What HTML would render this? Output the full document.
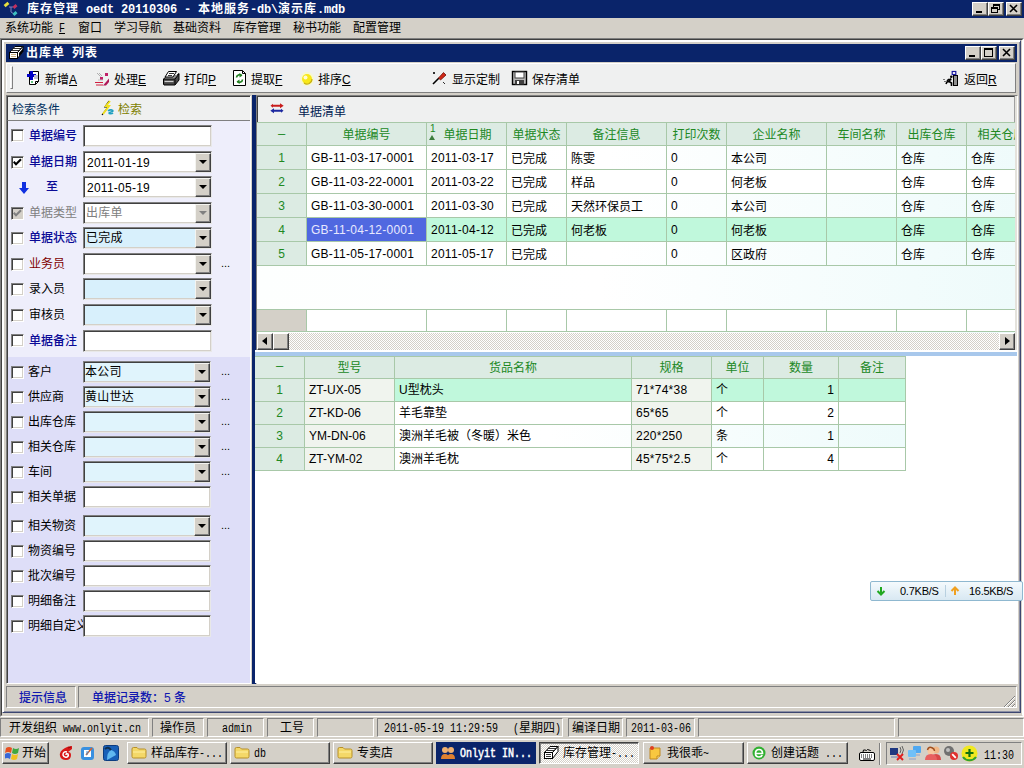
<!DOCTYPE html><html lang="zh-CN"><head><meta charset="utf-8"><title>库存管理</title><style>
*{box-sizing:border-box;margin:0;padding:0}
html,body{width:1024px;height:768px;overflow:hidden;background:#d4d0c8}
body{position:relative;font-family:"Liberation Sans","Noto Sans CJK SC",sans-serif;font-size:12px;color:#000;line-height:14px}
.a{position:absolute;white-space:nowrap}
.t{position:absolute;white-space:nowrap;height:14px;line-height:14px;font-size:12px}
.m{font-family:"Liberation Mono","Noto Sans CJK SC",monospace}
.b{font-weight:bold}
.navy{background:#0a246a}
.face{background:#d4d0c8}
.raised{border:1px solid;border-color:#fff #404040 #404040 #fff;box-shadow:inset -1px -1px 0 #808080,inset 1px 1px 0 #d4d0c8;background:#d4d0c8}
.sunk{border:1px solid;border-color:#808080 #fff #fff #808080}
.sunk2{border:1px solid;border-color:#808080 #fff #fff #808080;box-shadow:inset 1px 1px 0 #404040,inset -1px -1px 0 #d4d0c8}
.inp{position:absolute;background:#fff;border:1px solid;border-color:#808080 #e8e8e8 #e8e8e8 #808080;box-shadow:inset 1px 1px 0 #404040,inset -1px -1px 0 #d4d0c8}
.cb{position:absolute;width:13px;height:13px;background:#fff;border:1px solid;border-color:#808080 #fff #fff #808080;box-shadow:inset 1px 1px 0 #404040,inset -1px -1px 0 #d4d0c8}
.dd{position:absolute;width:16px;background:#d4d0c8;border:1px solid;border-color:#f4f4f0 #404040 #404040 #f4f4f0;box-shadow:inset -1px -1px 0 #808080}
.dd:after{content:"";position:absolute;left:3px;top:6px;border:4px solid transparent;border-top:4px solid #000;border-bottom:0}
.dd.dis:after{border-top-color:#808080}
.cap{position:absolute;width:16px;height:14px}
.cn_{font-family:"Liberation Sans","Noto Sans CJK SC",sans-serif}
.cb_{font-family:"Liberation Sans","Noto Sans CJK SC",sans-serif;font-weight:bold;letter-spacing:1px}
.ln_{font-family:"Liberation Mono",monospace;font-size:12px;display:inline-block;transform:scaleX(.8333);transform-origin:0 50%}
.lb_{font-family:"Liberation Mono",monospace;font-weight:bold;font-size:12px;letter-spacing:-0.2px}
.ar{letter-spacing:0.25px}
</style></head><body>
<div class="a navy" style="left:0px;top:0px;width:1024px;height:18px;"></div>
<div class="t " style="left:27px;top:2px;color:#fff"><span class="cb_">库存管理</span><span class="lb_"> oedt 20110306 - </span><span class="cb_">本地服务</span><span class="lb_">-db\</span><span class="cb_">演示库</span><span class="lb_">.mdb</span></div>
<svg class="a" style="left:3px;top:1px" width="16" height="16" viewBox="0 0 16 16"><path d="M6 6h4M8 6v5l3 2" stroke="#8080c0" stroke-width="1" fill="none"/><rect x="1" y="2" width="5" height="3" transform="rotate(-40 3.5 3.5)" fill="#e8e040"/><rect x="10" y="4" width="4" height="3" transform="rotate(-40 12 5.5)" fill="#c03060"/><rect x="10" y="11" width="4" height="3" transform="rotate(-40 12 12.5)" fill="#40c0c0"/></svg>
<div class="cap raised" style="left:972px;top:2px"><svg class="a" style="left:-1px;top:-1px" width="16" height="14" viewBox="0 0 16 14"><rect x="4" y="9" width="6" height="2" fill="#000"/></svg></div>
<div class="cap raised" style="left:988px;top:2px"><svg class="a" style="left:-1px;top:-1px" width="16" height="14" viewBox="0 0 16 14"><rect x="5.5" y="2.5" width="6" height="5" fill="none" stroke="#000"/><rect x="5" y="2" width="7" height="2" fill="#000"/><rect x="3.5" y="5.5" width="6" height="5" fill="#d4d0c8" stroke="#000"/><rect x="3" y="5" width="7" height="2" fill="#000"/></svg></div>
<div class="cap raised" style="left:1006px;top:2px"><svg class="a" style="left:-1px;top:-1px" width="16" height="14" viewBox="0 0 16 14"><path d="M4 3l7 7M11 3l-7 7" stroke="#000" stroke-width="1.6"/></svg></div>
<div class="t " style="left:5px;top:21px;"><span class="cn_">系统功能</span><span class="ln_" style="margin-right:-1.2px;"> </span><span class="ln_" style="margin-right:-1.2px;text-decoration:underline;">F</span></div>
<div class="t " style="left:78px;top:21px;"><span class="cn_">窗口</span></div>
<div class="t " style="left:114px;top:21px;"><span class="cn_">学习导航</span></div>
<div class="t " style="left:173px;top:21px;"><span class="cn_">基础资料</span></div>
<div class="t " style="left:233px;top:21px;"><span class="cn_">库存管理</span></div>
<div class="t " style="left:293px;top:21px;"><span class="cn_">秘书功能</span></div>
<div class="t " style="left:353px;top:21px;"><span class="cn_">配置管理</span></div>
<div class="a " style="left:0px;top:38px;width:1024px;height:679px;border:1px solid;border-color:#808080 #fff #fff #808080;background:#d4d0c8"></div>
<div class="a " style="left:1px;top:39px;width:1022px;height:677px;border:1px solid;border-color:#404040 #fff #d4d0c8 #404040;background:#d4d0c8"></div>
<div class="a " style="left:2px;top:40px;width:1019px;height:673px;background:#d4d0c8;border:1px solid;border-color:#fff #3c4670 #3c4670 #fff;box-shadow:inset 1px 1px 0 #fff,inset -1px -1px 0 #8c90a4"></div>
<div class="a navy" style="left:6px;top:44px;width:1011px;height:18px;"></div>
<div class="t " style="left:26px;top:46px;color:#fff"><span class="cb_">出库单</span><span class="lb_"> </span><span class="cb_">列表</span></div>
<svg class="a" style="left:8px;top:45px" width="16" height="16" viewBox="0 0 16 16"><path d="M1.500 7.500L7 1.500h8l-5.500 6z" fill="#fff" stroke="#000"/><path d="M4 5.500h8M5.500 3.500h8" stroke="#000" stroke-width=".8"/><path d="M9.500 7.500L15 1.500v5l-5.500 7z" fill="#fff" stroke="#000"/><path d="M11 8l4-4.500v3l-4 5z" fill="#000"/><rect x="1.500" y="7.500" width="8" height="6" fill="#fff" stroke="#000"/><path d="M3 9.500h5M3 11.500h5" stroke="#c8b080"/></svg>
<div class="cap raised" style="left:965px;top:46px"><svg class="a" style="left:-1px;top:-1px" width="16" height="14" viewBox="0 0 16 14"><rect x="4" y="9" width="6" height="2" fill="#000"/></svg></div>
<div class="cap raised" style="left:981px;top:46px"><svg class="a" style="left:-1px;top:-1px" width="16" height="14" viewBox="0 0 16 14"><rect x="3.5" y="2.5" width="8" height="8" fill="none" stroke="#000"/><rect x="3" y="2" width="9" height="2" fill="#000"/></svg></div>
<div class="cap raised" style="left:999px;top:46px"><svg class="a" style="left:-1px;top:-1px" width="16" height="14" viewBox="0 0 16 14"><path d="M4 3l7 7M11 3l-7 7" stroke="#000" stroke-width="1.6"/></svg></div>
<div class="a " style="left:6px;top:63px;width:1010px;height:30px;background:#eff0f0;border:1px solid;border-color:#fff #808080 #808080 #fff"></div>
<div class="a " style="left:10px;top:66px;width:3px;height:23px;border:1px solid;border-color:#fff #808080 #808080 #fff"></div>
<svg class="a" style="left:26px;top:70px" width="18" height="16" viewBox="0 0 18 16"><path d="M3.5 1.500h9v10l-3 3h-6z" fill="#fff" stroke="#000"/><path d="M9.500 14.500v-3h3" fill="none" stroke="#000"/><path d="M4 1h3v3h3v3H7v3H4V7H1V4h3z" fill="#0000c8"/><rect x="5" y="11" width="2" height="2" fill="#60c080"/><path d="M8 5h4v4H8z" fill="#c0c0d0"/></svg>
<div class="t " style="left:45px;top:73px;">新增<u>A</u></div>
<svg class="a" style="left:94px;top:70px" width="18" height="16" viewBox="0 0 18 16"><rect x="11" y="3" width="3" height="3" fill="#c02068"/><rect x="6" y="7" width="3" height="3" fill="#c02068"/><path d="M1 12.500h8M2 15h7" stroke="#d02040" stroke-width="1.200"/><path d="M9 15.500l6-7v3.500l-3 3.500z" fill="#b01858"/><path d="M3 3l3.500 3.500M5 3l3 3" stroke="#b0b0b0" stroke-width="1"/><path d="M4 10h5" stroke="#c0c0c0"/></svg>
<div class="t " style="left:114px;top:73px;">处理<u>E</u></div>
<svg class="a" style="left:162px;top:70px" width="18" height="16" viewBox="0 0 18 16"><path d="M1.500 9l3.500-3h9l3-2.500v6.500l-4 5h-11l-.5-1z" fill="#484848" stroke="#000"/><path d="M1.500 9h11.500l4-5" fill="none" stroke="#000"/><path d="M5 6l1.500-1h9l-3 3.500h-10z" fill="#909090"/><path d="M6.500 1.500h8l-3.500 5.500h-8z" fill="#fff" stroke="#000"/><path d="M7 3.500h5M6 5.500h4" stroke="#000" stroke-width=".8"/><path d="M2.500 11.500h9" stroke="#d0d0d0" stroke-width="1.200"/><path d="M13 9.500v5" stroke="#000"/></svg>
<div class="t " style="left:184px;top:73px;">打印<u>P</u></div>
<svg class="a" style="left:232px;top:70px" width="18" height="16" viewBox="0 0 18 16"><path d="M1.500 .500h9l3 3v12h-12z" fill="#fff" stroke="#000"/><path d="M10.500 .500v3h3" fill="none" stroke="#000"/><path d="M9.500 5.500a3 3 0 0 0-5 2M5.500 11.500a3 3 0 0 0 5-2" fill="none" stroke="#208020" stroke-width="1.700"/><path d="M7.500 3l3 2.500-3 2zM7.500 14l-3-2.500 3-2z" fill="#208020"/></svg>
<div class="t " style="left:251px;top:73px;">提取<u>F</u></div>
<svg class="a" style="left:298px;top:70px" width="18" height="16" viewBox="0 0 18 16"><circle cx="9" cy="9" r="7" fill="#fbfbc0" opacity=".7"/><circle cx="9" cy="9" r="5" fill="#f8e818"/><circle cx="7.500" cy="7.500" r="2" fill="#fffbd0"/><path d="M6 13a5 5 0 0 0 8-4" fill="none" stroke="#c8b010" stroke-width="1.200"/></svg>
<div class="t " style="left:318px;top:73px;">排序<u>C</u></div>
<svg class="a" style="left:431px;top:70px" width="18" height="16" viewBox="0 0 18 16"><path d="M2 14l6-6" stroke="#000" stroke-width="1.600"/><path d="M7.500 8l5-5.500 2.500 2.500-5.500 5z" fill="#d02818" stroke="#701008" stroke-width=".8"/><path d="M2 2l2 2M4 2l-2 2M12 12l2 2" stroke="#303030"/></svg>
<div class="t " style="left:452px;top:73px;">显示定制</div>
<svg class="a" style="left:511px;top:70px" width="18" height="16" viewBox="0 0 18 16"><rect x="1.500" y="1.500" width="14" height="13" fill="#b8b8b8" stroke="#000" stroke-width="1.400"/><rect x="4" y="2" width="9" height="6" fill="#fff" stroke="#404040"/><rect x="4" y="10" width="9" height="4.500" fill="#404040"/><rect x="6" y="11" width="2" height="3" fill="#fff"/></svg>
<div class="t " style="left:532px;top:73px;">保存清单</div>
<svg class="a" style="left:943px;top:70px" width="18" height="16" viewBox="0 0 18 16"><rect x="10.500" y="5.500" width="4" height="10" fill="#909090" stroke="#000"/><rect x="9.200" y="1.500" width="3.600" height="3" fill="#fff" stroke="#1818a0" stroke-width="1.200"/><circle cx="8.300" cy="6.800" r="1.300" fill="#000"/><path d="M8 8.500L6 11.500l2.500 1.500v3M6 11.500l-2 .5-1 2M8.500 9.500h-3l-1.500 1.500" stroke="#000" stroke-width="1.600" fill="none"/><path d="M.5 9.500h2M1.500 11.500h2" stroke="#000" stroke-dasharray="1 1"/></svg>
<div class="t " style="left:964px;top:73px;">返回<u>R</u></div>
<div class="a " style="left:6px;top:95px;width:245px;height:589px;border:1px solid;border-color:#808080 #fff #fff #808080;box-shadow:inset 1px 1px 0 #404040;background:#eeeefb"></div>
<div class="a " style="left:7px;top:96px;width:243px;height:25px;background:#eff0f0;border-bottom:1px solid #808080;border-top:1px solid #404040;border-left:1px solid #404040"></div>
<div class="a " style="left:8px;top:357px;width:242px;height:326px;background:#dedef8"></div>
<div class="t " style="left:12px;top:103px;color:#003060">检索条件</div>
<svg class="a" style="left:100px;top:100px" width="16" height="16" viewBox="0 0 16 16"><path d="M9 1l-4 6h3l-6 8" stroke="#000" stroke-width="1.200" fill="none"/><path d="M10 1L6 6h3L3 14" stroke="#f0e020" stroke-width="2" fill="none"/><path d="M8 11c2-2 5-1 5 0s-4 1-4 2 3 1 4 0" stroke="#20a0c0" stroke-width="1.600" fill="none"/></svg>
<div class="t " style="left:118px;top:103px;color:#808000">检索</div>
<div class="cb" style="left:11px;top:129px;"></div>
<div class="t " style="left:29px;top:129px;color:#0a0a96;font-weight:500">单据编号</div>
<div class="inp" style="left:83px;top:125px;width:129px;height:22px;background:#fff"></div>
<div class="cb" style="left:11px;top:156px;"><svg class="a" style="left:1px;top:1px" width="9" height="9" viewBox="0 0 9 9"><path d="M.7 3.800l2.300 2.400 5-5" stroke="#000" stroke-width="2.100" fill="none"/></svg></div>
<div class="t " style="left:29px;top:155px;color:#0a0a96;font-weight:500">单据日期</div>
<div class="inp" style="left:83px;top:151px;width:129px;height:22px;background:#fff"></div>
<div class="dd" style="left:195px;top:153px;height:19px"></div>
<div class="t ar" style="left:87px;top:156px;color:#000">2011-01-19</div>
<div class="t " style="left:46px;top:180px;color:#0a0a96;font-weight:500">至</div>
<div class="inp" style="left:83px;top:176px;width:129px;height:22px;background:#fff"></div>
<div class="dd" style="left:195px;top:178px;height:19px"></div>
<div class="t ar" style="left:87px;top:181px;color:#000">2011-05-19</div>
<div class="cb" style="left:11px;top:207px;background:#d4d0c8;"><svg class="a" style="left:1px;top:1px" width="9" height="9" viewBox="0 0 9 9"><path d="M.7 3.800l2.300 2.400 5-5" stroke="#808080" stroke-width="2.100" fill="none"/></svg></div>
<div class="t " style="left:29px;top:206px;color:#808080;">单据类型</div>
<div class="inp" style="left:83px;top:202px;width:129px;height:22px;background:#fff"></div>
<div class="dd dis" style="left:195px;top:204px;height:19px"></div>
<div class="t ar" style="left:86px;top:206px;color:#808080">出库单</div>
<div class="cb" style="left:11px;top:232px;"></div>
<div class="t " style="left:29px;top:231px;color:#0a0a96;font-weight:500">单据状态</div>
<div class="inp" style="left:83px;top:227px;width:129px;height:22px;background:#d8f0fc"></div>
<div class="dd" style="left:195px;top:229px;height:19px"></div>
<div class="t ar" style="left:86px;top:231px;color:#000">已完成</div>
<div class="cb" style="left:11px;top:258px;"></div>
<div class="t " style="left:29px;top:257px;color:#800000;">业务员</div>
<div class="inp" style="left:83px;top:253px;width:129px;height:22px;background:#fff"></div>
<div class="dd" style="left:195px;top:255px;height:19px"></div>
<div class="t " style="left:221px;top:256px;font-size:11px">...</div>
<div class="cb" style="left:11px;top:283px;"></div>
<div class="t " style="left:29px;top:282px;color:#000;">录入员</div>
<div class="inp" style="left:83px;top:278px;width:129px;height:22px;background:#d8f0fc"></div>
<div class="dd" style="left:195px;top:280px;height:19px"></div>
<div class="cb" style="left:11px;top:309px;"></div>
<div class="t " style="left:29px;top:308px;color:#000;">审核员</div>
<div class="inp" style="left:83px;top:304px;width:129px;height:22px;background:#d8f0fc"></div>
<div class="dd" style="left:195px;top:306px;height:19px"></div>
<div class="cb" style="left:11px;top:334px;"></div>
<div class="t " style="left:29px;top:334px;color:#0a0a96;font-weight:500">单据备注</div>
<div class="inp" style="left:83px;top:330px;width:129px;height:22px;background:#fff"></div>
<svg class="a" style="left:18px;top:182px" width="12" height="13" viewBox="0 0 12 13"><path d="M4 0h4v6h3l-5 6-5-6h3z" fill="#1030e0"/></svg>
<div class="cb" style="left:11px;top:366px;"></div>
<div class="t " style="left:28px;top:365px;color:#000;">客户</div>
<div class="inp" style="left:83px;top:361px;width:128px;height:22px;background:#e0f4fc"></div>
<div class="dd" style="left:194px;top:363px;height:19px"></div>
<div class="t ar" style="left:85px;top:365px;color:#000">本公司</div>
<div class="t " style="left:221px;top:364px;font-size:11px">...</div>
<div class="cb" style="left:11px;top:391px;"></div>
<div class="t " style="left:28px;top:390px;color:#000;">供应商</div>
<div class="inp" style="left:83px;top:386px;width:128px;height:22px;background:#e0f4fc"></div>
<div class="dd" style="left:194px;top:388px;height:19px"></div>
<div class="t ar" style="left:85px;top:390px;color:#000">黄山世达</div>
<div class="t " style="left:221px;top:389px;font-size:11px">...</div>
<div class="cb" style="left:11px;top:416px;"></div>
<div class="t " style="left:28px;top:415px;color:#000;">出库仓库</div>
<div class="inp" style="left:83px;top:411px;width:128px;height:22px;background:#e0f4fc"></div>
<div class="dd" style="left:194px;top:413px;height:19px"></div>
<div class="t " style="left:221px;top:414px;font-size:11px">...</div>
<div class="cb" style="left:11px;top:441px;"></div>
<div class="t " style="left:28px;top:440px;color:#000;">相关仓库</div>
<div class="inp" style="left:83px;top:436px;width:128px;height:22px;background:#e0f4fc"></div>
<div class="dd" style="left:194px;top:438px;height:19px"></div>
<div class="t " style="left:221px;top:439px;font-size:11px">...</div>
<div class="cb" style="left:11px;top:466px;"></div>
<div class="t " style="left:28px;top:465px;color:#000;">车间</div>
<div class="inp" style="left:83px;top:461px;width:128px;height:22px;background:#e0f4fc"></div>
<div class="dd" style="left:194px;top:463px;height:19px"></div>
<div class="t " style="left:221px;top:464px;font-size:11px">...</div>
<div class="cb" style="left:11px;top:491px;"></div>
<div class="t " style="left:28px;top:490px;color:#000;">相关单据</div>
<div class="inp" style="left:83px;top:486px;width:128px;height:22px;background:#fff"></div>
<div class="cb" style="left:11px;top:520px;"></div>
<div class="t " style="left:28px;top:519px;color:#000;">相关物资</div>
<div class="inp" style="left:83px;top:515px;width:128px;height:22px;background:#e0f4fc"></div>
<div class="dd" style="left:194px;top:517px;height:19px"></div>
<div class="t " style="left:221px;top:518px;font-size:11px">...</div>
<div class="cb" style="left:11px;top:545px;"></div>
<div class="t " style="left:28px;top:544px;color:#000;">物资编号</div>
<div class="inp" style="left:83px;top:540px;width:128px;height:22px;background:#fff"></div>
<div class="cb" style="left:11px;top:570px;"></div>
<div class="t " style="left:28px;top:569px;color:#000;">批次编号</div>
<div class="inp" style="left:83px;top:565px;width:128px;height:22px;background:#fff"></div>
<div class="cb" style="left:11px;top:595px;"></div>
<div class="t " style="left:28px;top:594px;color:#000;">明细备注</div>
<div class="inp" style="left:83px;top:590px;width:128px;height:22px;background:#fff"></div>
<div class="cb" style="left:11px;top:620px;"></div>
<div class="t " style="left:28px;top:619px;color:#000;">明细自定义</div>
<div class="inp" style="left:83px;top:615px;width:128px;height:22px;background:#fff"></div>
<div class="a navy" style="left:252px;top:95px;width:4px;height:589px;"></div>
<div class="a " style="left:256px;top:95px;width:762px;height:589px;border:1px solid;border-color:#808080 #fff #fff #808080;background:#fff"></div>
<div class="a " style="left:257px;top:96px;width:758px;height:26px;background:#eff0f0;border-top:1px solid #404040;border-left:1px solid #404040;border-right:1px solid #a0a0a0"></div>
<div class="a " style="left:1015px;top:96px;width:2px;height:255px;background:#e4e2dc"></div>
<svg class="a" style="left:269px;top:102px" width="16" height="13" viewBox="0 0 16 13"><path d="M1.500 3.750l2.500-2v1.100h7v-1.600l3.700 2.500-3.700 2.500v-1.600h-7v1.100z" fill="#c81c1c"/><path d="M14.500 8.750l-2.500 2v-1.100h-7v1.600l-3.700-2.500 3.700-2.500v1.600h7v-1.100z" fill="#1c28a0"/></svg>
<div class="t " style="left:298px;top:105px;color:#002050">单据清单</div>
<div class="a " style="left:257px;top:122px;width:758px;height:211px;background:linear-gradient(90deg,#fdfffe 0%,#fff 45%,#eefbfb 100%)"></div>
<div class="a" style="left:257px;top:122px;width:758px;height:144px;overflow:hidden">
<div class="a " style="left:0px;top:0px;width:780px;height:24px;background:#dcebe3;border-bottom:1px solid #a8c8a8;border-top:1px solid #a8c8a8"></div>
<div class="a" style="left:0px;top:0;width:50px;height:23px;border-right:1px solid #a8c8a8;text-align:center;line-height:27px;color:#20881f;overflow:hidden"><span style="font-size:13px;position:relative;top:-2px">–</span></div>
<div class="a" style="left:50px;top:0;width:120px;height:23px;border-right:1px solid #a8c8a8;text-align:center;line-height:27px;color:#20881f;overflow:hidden">单据编号</div>
<div class="a" style="left:170px;top:0;width:80px;height:23px;border-right:1px solid #a8c8a8;text-align:center;line-height:27px;color:#20881f;overflow:hidden"><span style="position:absolute;left:3px;top:-7px;font-size:10px">1</span><span style="position:absolute;left:2px;top:13px;width:0;height:0;border:3px solid transparent;border-top:0;border-bottom:5px solid #3c7c3c"></span><span style="position:relative;left:1px">单据日期</span></div>
<div class="a" style="left:250px;top:0;width:60px;height:23px;border-right:1px solid #a8c8a8;text-align:center;line-height:27px;color:#20881f;overflow:hidden">单据状态</div>
<div class="a" style="left:310px;top:0;width:100px;height:23px;border-right:1px solid #a8c8a8;text-align:center;line-height:27px;color:#20881f;overflow:hidden">备注信息</div>
<div class="a" style="left:410px;top:0;width:60px;height:23px;border-right:1px solid #a8c8a8;text-align:center;line-height:27px;color:#20881f;overflow:hidden">打印次数</div>
<div class="a" style="left:470px;top:0;width:100px;height:23px;border-right:1px solid #a8c8a8;text-align:center;line-height:27px;color:#20881f;overflow:hidden">企业名称</div>
<div class="a" style="left:570px;top:0;width:70px;height:23px;border-right:1px solid #a8c8a8;text-align:center;line-height:27px;color:#20881f;overflow:hidden">车间名称</div>
<div class="a" style="left:640px;top:0;width:70px;height:23px;border-right:1px solid #a8c8a8;text-align:center;line-height:27px;color:#20881f;overflow:hidden">出库仓库</div>
<div class="a" style="left:710px;top:0;width:70px;height:23px;border-right:1px solid #a8c8a8;text-align:center;line-height:27px;color:#20881f;overflow:hidden">相关仓库</div>
<div class="a " style="left:0px;top:24px;width:780px;height:24px;background:linear-gradient(90deg,#fdfffe 0%,#fff 45%,#eefbfb 100%);border-bottom:1px solid #a8c8a8"></div>
<div class="a" style="left:0px;top:24px;width:50px;height:23px;border-right:1px solid #a8c8a8;line-height:25px;overflow:hidden;text-align:center;color:#20881f;background:#dcebe3;">1</div>
<div class="a ar" style="left:50px;top:24px;width:120px;height:23px;border-right:1px solid #a8c8a8;line-height:25px;overflow:hidden;text-align:left;padding:0 4px;">GB-11-03-17-0001</div>
<div class="a ar" style="left:170px;top:24px;width:80px;height:23px;border-right:1px solid #a8c8a8;line-height:25px;overflow:hidden;text-align:left;padding:0 4px;">2011-03-17</div>
<div class="a" style="left:250px;top:24px;width:60px;height:23px;border-right:1px solid #a8c8a8;line-height:27px;overflow:hidden;text-align:left;padding:0 4px;">已完成</div>
<div class="a" style="left:310px;top:24px;width:100px;height:23px;border-right:1px solid #a8c8a8;line-height:27px;overflow:hidden;text-align:left;padding:0 4px;">陈雯</div>
<div class="a" style="left:410px;top:24px;width:60px;height:23px;border-right:1px solid #a8c8a8;line-height:25px;overflow:hidden;text-align:left;padding:0 4px;">0</div>
<div class="a" style="left:470px;top:24px;width:100px;height:23px;border-right:1px solid #a8c8a8;line-height:27px;overflow:hidden;text-align:left;padding:0 4px;">本公司</div>
<div class="a" style="left:570px;top:24px;width:70px;height:23px;border-right:1px solid #a8c8a8;line-height:27px;overflow:hidden;text-align:left;padding:0 4px;"></div>
<div class="a" style="left:640px;top:24px;width:70px;height:23px;border-right:1px solid #a8c8a8;line-height:27px;overflow:hidden;text-align:left;padding:0 4px;">仓库</div>
<div class="a" style="left:710px;top:24px;width:70px;height:23px;border-right:1px solid #a8c8a8;line-height:27px;overflow:hidden;text-align:left;padding:0 4px;">仓库</div>
<div class="a " style="left:0px;top:48px;width:780px;height:24px;background:#fff;border-bottom:1px solid #a8c8a8"></div>
<div class="a" style="left:0px;top:48px;width:50px;height:23px;border-right:1px solid #a8c8a8;line-height:25px;overflow:hidden;text-align:center;color:#20881f;background:#dcebe3;">2</div>
<div class="a ar" style="left:50px;top:48px;width:120px;height:23px;border-right:1px solid #a8c8a8;line-height:25px;overflow:hidden;text-align:left;padding:0 4px;">GB-11-03-22-0001</div>
<div class="a ar" style="left:170px;top:48px;width:80px;height:23px;border-right:1px solid #a8c8a8;line-height:25px;overflow:hidden;text-align:left;padding:0 4px;">2011-03-22</div>
<div class="a" style="left:250px;top:48px;width:60px;height:23px;border-right:1px solid #a8c8a8;line-height:27px;overflow:hidden;text-align:left;padding:0 4px;">已完成</div>
<div class="a" style="left:310px;top:48px;width:100px;height:23px;border-right:1px solid #a8c8a8;line-height:27px;overflow:hidden;text-align:left;padding:0 4px;">样品</div>
<div class="a" style="left:410px;top:48px;width:60px;height:23px;border-right:1px solid #a8c8a8;line-height:25px;overflow:hidden;text-align:left;padding:0 4px;">0</div>
<div class="a" style="left:470px;top:48px;width:100px;height:23px;border-right:1px solid #a8c8a8;line-height:27px;overflow:hidden;text-align:left;padding:0 4px;">何老板</div>
<div class="a" style="left:570px;top:48px;width:70px;height:23px;border-right:1px solid #a8c8a8;line-height:27px;overflow:hidden;text-align:left;padding:0 4px;"></div>
<div class="a" style="left:640px;top:48px;width:70px;height:23px;border-right:1px solid #a8c8a8;line-height:27px;overflow:hidden;text-align:left;padding:0 4px;">仓库</div>
<div class="a" style="left:710px;top:48px;width:70px;height:23px;border-right:1px solid #a8c8a8;line-height:27px;overflow:hidden;text-align:left;padding:0 4px;">仓库</div>
<div class="a " style="left:0px;top:72px;width:780px;height:24px;background:linear-gradient(90deg,#fdfffe 0%,#fff 45%,#eefbfb 100%);border-bottom:1px solid #a8c8a8"></div>
<div class="a" style="left:0px;top:72px;width:50px;height:23px;border-right:1px solid #a8c8a8;line-height:25px;overflow:hidden;text-align:center;color:#20881f;background:#dcebe3;">3</div>
<div class="a ar" style="left:50px;top:72px;width:120px;height:23px;border-right:1px solid #a8c8a8;line-height:25px;overflow:hidden;text-align:left;padding:0 4px;">GB-11-03-30-0001</div>
<div class="a ar" style="left:170px;top:72px;width:80px;height:23px;border-right:1px solid #a8c8a8;line-height:25px;overflow:hidden;text-align:left;padding:0 4px;">2011-03-30</div>
<div class="a" style="left:250px;top:72px;width:60px;height:23px;border-right:1px solid #a8c8a8;line-height:27px;overflow:hidden;text-align:left;padding:0 4px;">已完成</div>
<div class="a" style="left:310px;top:72px;width:100px;height:23px;border-right:1px solid #a8c8a8;line-height:27px;overflow:hidden;text-align:left;padding:0 4px;">天然环保员工</div>
<div class="a" style="left:410px;top:72px;width:60px;height:23px;border-right:1px solid #a8c8a8;line-height:25px;overflow:hidden;text-align:left;padding:0 4px;">0</div>
<div class="a" style="left:470px;top:72px;width:100px;height:23px;border-right:1px solid #a8c8a8;line-height:27px;overflow:hidden;text-align:left;padding:0 4px;">本公司</div>
<div class="a" style="left:570px;top:72px;width:70px;height:23px;border-right:1px solid #a8c8a8;line-height:27px;overflow:hidden;text-align:left;padding:0 4px;"></div>
<div class="a" style="left:640px;top:72px;width:70px;height:23px;border-right:1px solid #a8c8a8;line-height:27px;overflow:hidden;text-align:left;padding:0 4px;">仓库</div>
<div class="a" style="left:710px;top:72px;width:70px;height:23px;border-right:1px solid #a8c8a8;line-height:27px;overflow:hidden;text-align:left;padding:0 4px;">仓库</div>
<div class="a " style="left:0px;top:96px;width:780px;height:24px;background:#c0f8dc;border-bottom:1px solid #a8c8a8"></div>
<div class="a" style="left:0px;top:96px;width:50px;height:23px;border-right:1px solid #a8c8a8;line-height:25px;overflow:hidden;text-align:center;color:#20881f;background:#dcebe3;">4</div>
<div class="a ar" style="left:50px;top:96px;width:120px;height:23px;border-right:1px solid #a8c8a8;line-height:25px;overflow:hidden;text-align:left;padding:0 4px;background:#5068e0;color:#e8e8ff;">GB-11-04-12-0001</div>
<div class="a ar" style="left:170px;top:96px;width:80px;height:23px;border-right:1px solid #a8c8a8;line-height:25px;overflow:hidden;text-align:left;padding:0 4px;">2011-04-12</div>
<div class="a" style="left:250px;top:96px;width:60px;height:23px;border-right:1px solid #a8c8a8;line-height:27px;overflow:hidden;text-align:left;padding:0 4px;">已完成</div>
<div class="a" style="left:310px;top:96px;width:100px;height:23px;border-right:1px solid #a8c8a8;line-height:27px;overflow:hidden;text-align:left;padding:0 4px;">何老板</div>
<div class="a" style="left:410px;top:96px;width:60px;height:23px;border-right:1px solid #a8c8a8;line-height:25px;overflow:hidden;text-align:left;padding:0 4px;">0</div>
<div class="a" style="left:470px;top:96px;width:100px;height:23px;border-right:1px solid #a8c8a8;line-height:27px;overflow:hidden;text-align:left;padding:0 4px;">何老板</div>
<div class="a" style="left:570px;top:96px;width:70px;height:23px;border-right:1px solid #a8c8a8;line-height:27px;overflow:hidden;text-align:left;padding:0 4px;"></div>
<div class="a" style="left:640px;top:96px;width:70px;height:23px;border-right:1px solid #a8c8a8;line-height:27px;overflow:hidden;text-align:left;padding:0 4px;">仓库</div>
<div class="a" style="left:710px;top:96px;width:70px;height:23px;border-right:1px solid #a8c8a8;line-height:27px;overflow:hidden;text-align:left;padding:0 4px;">仓库</div>
<div class="a " style="left:0px;top:120px;width:780px;height:24px;background:linear-gradient(90deg,#fdfffe 0%,#fff 45%,#eefbfb 100%);border-bottom:1px solid #a8c8a8"></div>
<div class="a" style="left:0px;top:120px;width:50px;height:23px;border-right:1px solid #a8c8a8;line-height:25px;overflow:hidden;text-align:center;color:#20881f;background:#dcebe3;">5</div>
<div class="a ar" style="left:50px;top:120px;width:120px;height:23px;border-right:1px solid #a8c8a8;line-height:25px;overflow:hidden;text-align:left;padding:0 4px;">GB-11-05-17-0001</div>
<div class="a ar" style="left:170px;top:120px;width:80px;height:23px;border-right:1px solid #a8c8a8;line-height:25px;overflow:hidden;text-align:left;padding:0 4px;">2011-05-17</div>
<div class="a" style="left:250px;top:120px;width:60px;height:23px;border-right:1px solid #a8c8a8;line-height:27px;overflow:hidden;text-align:left;padding:0 4px;">已完成</div>
<div class="a" style="left:310px;top:120px;width:100px;height:23px;border-right:1px solid #a8c8a8;line-height:27px;overflow:hidden;text-align:left;padding:0 4px;"></div>
<div class="a" style="left:410px;top:120px;width:60px;height:23px;border-right:1px solid #a8c8a8;line-height:25px;overflow:hidden;text-align:left;padding:0 4px;">0</div>
<div class="a" style="left:470px;top:120px;width:100px;height:23px;border-right:1px solid #a8c8a8;line-height:27px;overflow:hidden;text-align:left;padding:0 4px;">区政府</div>
<div class="a" style="left:570px;top:120px;width:70px;height:23px;border-right:1px solid #a8c8a8;line-height:27px;overflow:hidden;text-align:left;padding:0 4px;"></div>
<div class="a" style="left:640px;top:120px;width:70px;height:23px;border-right:1px solid #a8c8a8;line-height:27px;overflow:hidden;text-align:left;padding:0 4px;">仓库</div>
<div class="a" style="left:710px;top:120px;width:70px;height:23px;border-right:1px solid #a8c8a8;line-height:27px;overflow:hidden;text-align:left;padding:0 4px;">仓库</div>
</div>
<div class="a " style="left:257px;top:309px;width:758px;height:23px;background:#fff;border-top:1px solid #a8c8a8;border-bottom:1px solid #a8c8a8"></div>
<div class="a " style="left:257px;top:310px;width:50px;height:21px;border-right:1px solid #a8c8a8;background:#d4d0c8;"></div>
<div class="a " style="left:307px;top:310px;width:120px;height:21px;border-right:1px solid #a8c8a8;"></div>
<div class="a " style="left:427px;top:310px;width:80px;height:21px;border-right:1px solid #a8c8a8;"></div>
<div class="a " style="left:507px;top:310px;width:60px;height:21px;border-right:1px solid #a8c8a8;"></div>
<div class="a " style="left:567px;top:310px;width:100px;height:21px;border-right:1px solid #a8c8a8;"></div>
<div class="a " style="left:667px;top:310px;width:60px;height:21px;border-right:1px solid #a8c8a8;"></div>
<div class="a " style="left:727px;top:310px;width:100px;height:21px;border-right:1px solid #a8c8a8;"></div>
<div class="a " style="left:827px;top:310px;width:70px;height:21px;border-right:1px solid #a8c8a8;"></div>
<div class="a " style="left:897px;top:310px;width:70px;height:21px;border-right:1px solid #a8c8a8;"></div>
<div class="a " style="left:967px;top:310px;width:48px;height:21px;"></div>
<div class="a " style="left:257px;top:333px;width:758px;height:17px;background:repeating-conic-gradient(#fff 0 25%,#d4d0c8 0 50%) 0 0/2px 2px"></div>
<div class="a raised" style="left:257px;top:333px;width:16px;height:17px;"><svg class="a" style="left:3px;top:3px" width="8" height="9" viewBox="0 0 8 9"><path d="M6 0v8L1 4z" fill="#000"/></svg></div>
<div class="a raised" style="left:273px;top:333px;width:16px;height:17px;"></div>
<div class="a raised" style="left:999px;top:333px;width:16px;height:17px;"><svg class="a" style="left:4px;top:3px" width="8" height="9" viewBox="0 0 8 9"><path d="M1 0v8l5-4z" fill="#000"/></svg></div>
<div class="a " style="left:255px;top:350px;width:762px;height:2px;background:#fff"></div>
<div class="a " style="left:255px;top:352px;width:762px;height:4px;background:#a8c8ec"></div>
<div class="a " style="left:255px;top:356px;width:762px;height:327px;background:#fff"></div>
<div class="a" style="left:255px;top:356px;width:651px;height:115px;overflow:hidden">
<div class="a " style="left:0px;top:0px;width:651px;height:23px;background:#dcebe3;border-bottom:1px solid #a8c8a8;border-top:1px solid #a8c8a8"></div>
<div class="a" style="left:0px;top:0;width:50px;height:22px;border-right:1px solid #a8c8a8;text-align:center;line-height:24px;color:#20881f;overflow:hidden"><span style="font-size:13px;position:relative;top:-2px">–</span></div>
<div class="a" style="left:50px;top:0;width:90px;height:22px;border-right:1px solid #a8c8a8;text-align:center;line-height:24px;color:#20881f;overflow:hidden">型号</div>
<div class="a" style="left:140px;top:0;width:237px;height:22px;border-right:1px solid #a8c8a8;text-align:center;line-height:24px;color:#20881f;overflow:hidden">货品名称</div>
<div class="a" style="left:377px;top:0;width:80px;height:22px;border-right:1px solid #a8c8a8;text-align:center;line-height:24px;color:#20881f;overflow:hidden">规格</div>
<div class="a" style="left:457px;top:0;width:52px;height:22px;border-right:1px solid #a8c8a8;text-align:center;line-height:24px;color:#20881f;overflow:hidden">单位</div>
<div class="a" style="left:509px;top:0;width:75px;height:22px;border-right:1px solid #a8c8a8;text-align:center;line-height:24px;color:#20881f;overflow:hidden">数量</div>
<div class="a" style="left:584px;top:0;width:67px;height:22px;border-right:1px solid #a8c8a8;text-align:center;line-height:24px;color:#20881f;overflow:hidden">备注</div>
<div class="a " style="left:0px;top:23px;width:651px;height:23px;background:#c0f8dc;border-bottom:1px solid #a8c8a8"></div>
<div class="a" style="left:0px;top:23px;width:50px;height:22px;border-right:1px solid #a8c8a8;line-height:22px;overflow:hidden;text-align:center;color:#20881f;background:#dcebe3;">1</div>
<div class="a" style="left:50px;top:23px;width:90px;height:22px;border-right:1px solid #a8c8a8;line-height:22px;overflow:hidden;text-align:left;padding:0 4px;background:#f0f4ee;">ZT-UX-05</div>
<div class="a" style="left:140px;top:23px;width:237px;height:22px;border-right:1px solid #a8c8a8;line-height:22px;overflow:hidden;text-align:left;padding:0 4px;">U型枕头</div>
<div class="a ar" style="left:377px;top:23px;width:80px;height:22px;border-right:1px solid #a8c8a8;line-height:22px;overflow:hidden;text-align:left;padding:0 4px;background:#f0f4ee;">71*74*38</div>
<div class="a" style="left:457px;top:23px;width:52px;height:22px;border-right:1px solid #a8c8a8;line-height:22px;overflow:hidden;text-align:left;padding:0 4px;">个</div>
<div class="a" style="left:509px;top:23px;width:75px;height:22px;border-right:1px solid #a8c8a8;line-height:22px;overflow:hidden;text-align:right;padding:0 4px;">1</div>
<div class="a" style="left:584px;top:23px;width:67px;height:22px;border-right:1px solid #a8c8a8;line-height:22px;overflow:hidden;text-align:left;padding:0 4px;"></div>
<div class="a " style="left:0px;top:46px;width:651px;height:23px;background:#fff;border-bottom:1px solid #a8c8a8"></div>
<div class="a" style="left:0px;top:46px;width:50px;height:22px;border-right:1px solid #a8c8a8;line-height:22px;overflow:hidden;text-align:center;color:#20881f;background:#dcebe3;">2</div>
<div class="a" style="left:50px;top:46px;width:90px;height:22px;border-right:1px solid #a8c8a8;line-height:22px;overflow:hidden;text-align:left;padding:0 4px;background:#f0f4ee;">ZT-KD-06</div>
<div class="a" style="left:140px;top:46px;width:237px;height:22px;border-right:1px solid #a8c8a8;line-height:22px;overflow:hidden;text-align:left;padding:0 4px;">羊毛靠垫</div>
<div class="a ar" style="left:377px;top:46px;width:80px;height:22px;border-right:1px solid #a8c8a8;line-height:22px;overflow:hidden;text-align:left;padding:0 4px;background:#f0f4ee;">65*65</div>
<div class="a" style="left:457px;top:46px;width:52px;height:22px;border-right:1px solid #a8c8a8;line-height:22px;overflow:hidden;text-align:left;padding:0 4px;">个</div>
<div class="a" style="left:509px;top:46px;width:75px;height:22px;border-right:1px solid #a8c8a8;line-height:22px;overflow:hidden;text-align:right;padding:0 4px;">2</div>
<div class="a" style="left:584px;top:46px;width:67px;height:22px;border-right:1px solid #a8c8a8;line-height:22px;overflow:hidden;text-align:left;padding:0 4px;"></div>
<div class="a " style="left:0px;top:69px;width:651px;height:23px;background:linear-gradient(90deg,#fdfffe 0%,#fff 45%,#eefbfb 100%);border-bottom:1px solid #a8c8a8"></div>
<div class="a" style="left:0px;top:69px;width:50px;height:22px;border-right:1px solid #a8c8a8;line-height:22px;overflow:hidden;text-align:center;color:#20881f;background:#dcebe3;">3</div>
<div class="a" style="left:50px;top:69px;width:90px;height:22px;border-right:1px solid #a8c8a8;line-height:22px;overflow:hidden;text-align:left;padding:0 4px;background:#f0f4ee;">YM-DN-06</div>
<div class="a" style="left:140px;top:69px;width:237px;height:22px;border-right:1px solid #a8c8a8;line-height:22px;overflow:hidden;text-align:left;padding:0 4px;">澳洲羊毛被（冬暖）米色</div>
<div class="a ar" style="left:377px;top:69px;width:80px;height:22px;border-right:1px solid #a8c8a8;line-height:22px;overflow:hidden;text-align:left;padding:0 4px;background:#f0f4ee;">220*250</div>
<div class="a" style="left:457px;top:69px;width:52px;height:22px;border-right:1px solid #a8c8a8;line-height:22px;overflow:hidden;text-align:left;padding:0 4px;">条</div>
<div class="a" style="left:509px;top:69px;width:75px;height:22px;border-right:1px solid #a8c8a8;line-height:22px;overflow:hidden;text-align:right;padding:0 4px;">1</div>
<div class="a" style="left:584px;top:69px;width:67px;height:22px;border-right:1px solid #a8c8a8;line-height:22px;overflow:hidden;text-align:left;padding:0 4px;"></div>
<div class="a " style="left:0px;top:92px;width:651px;height:23px;background:#fff;border-bottom:1px solid #a8c8a8"></div>
<div class="a" style="left:0px;top:92px;width:50px;height:22px;border-right:1px solid #a8c8a8;line-height:22px;overflow:hidden;text-align:center;color:#20881f;background:#dcebe3;">4</div>
<div class="a" style="left:50px;top:92px;width:90px;height:22px;border-right:1px solid #a8c8a8;line-height:22px;overflow:hidden;text-align:left;padding:0 4px;background:#f0f4ee;">ZT-YM-02</div>
<div class="a" style="left:140px;top:92px;width:237px;height:22px;border-right:1px solid #a8c8a8;line-height:22px;overflow:hidden;text-align:left;padding:0 4px;">澳洲羊毛枕</div>
<div class="a ar" style="left:377px;top:92px;width:80px;height:22px;border-right:1px solid #a8c8a8;line-height:22px;overflow:hidden;text-align:left;padding:0 4px;background:#f0f4ee;">45*75*2.5</div>
<div class="a" style="left:457px;top:92px;width:52px;height:22px;border-right:1px solid #a8c8a8;line-height:22px;overflow:hidden;text-align:left;padding:0 4px;">个</div>
<div class="a" style="left:509px;top:92px;width:75px;height:22px;border-right:1px solid #a8c8a8;line-height:22px;overflow:hidden;text-align:right;padding:0 4px;">4</div>
<div class="a" style="left:584px;top:92px;width:67px;height:22px;border-right:1px solid #a8c8a8;line-height:22px;overflow:hidden;text-align:left;padding:0 4px;"></div>
</div>
<div class="a sunk" style="left:6px;top:686px;width:70px;height:22px;"></div>
<div class="t " style="left:19px;top:691px;color:#1018b0;font-weight:500">提示信息</div>
<div class="a sunk" style="left:78px;top:686px;width:939px;height:22px;"></div>
<div class="t " style="left:92px;top:691px;color:#1018b0;font-weight:500">单据记录数：5 条</div>
<svg class="a" style="left:1003px;top:695px" width="13" height="13" viewBox="0 0 13 13"><path d="M12 1L1 12M12 5L5 12M12 9L9 12" stroke="#808080"/><path d="M12 2L2 12M12 6L6 12M12 10L10 12" stroke="#fff"/></svg>
<div class="a sunk" style="left:0px;top:718px;width:149px;height:19px;"></div>
<div class="t " style="left:9px;top:721px;"><span class="cn_">开发组织</span><span class="ln_" style="margin-right:-16.8px;"> www.onlyit.cn</span></div>
<div class="a sunk" style="left:152px;top:718px;width:52px;height:19px;"></div>
<div class="t " style="left:160px;top:721px;"><span class="cn_">操作员</span></div>
<div class="a sunk" style="left:207px;top:718px;width:57px;height:19px;"></div>
<div class="t " style="left:222px;top:721px;"><span class="ln_" style="margin-right:-6.0px;">admin</span></div>
<div class="a sunk" style="left:267px;top:718px;width:47px;height:19px;"></div>
<div class="t " style="left:280px;top:721px;"><span class="cn_">工号</span></div>
<div class="a sunk" style="left:317px;top:718px;width:57px;height:19px;"></div>
<div class="a sunk" style="left:377px;top:718px;width:186px;height:19px;"></div>
<div class="t " style="left:384px;top:721px;"><span class="ln_" style="margin-right:-22.8px;">2011-05-19 11:29:59</span><span class="ln_" style="margin-right:-1.2px;"> </span><span class="ln_" style="margin-right:-1.2px;"> </span><span style="padding-left:3px"></span><span class="ln_" style="margin-right:-1.2px;">(</span><span class="cn_">星期四</span><span class="ln_" style="margin-right:-1.2px;">)</span></div>
<div class="a sunk" style="left:568px;top:718px;width:55px;height:19px;"></div>
<div class="t " style="left:572px;top:721px;"><span class="cn_">编译日期</span></div>
<div class="a sunk" style="left:626px;top:718px;width:69px;height:19px;"></div>
<div class="t " style="left:631px;top:721px;"><span class="ln_" style="margin-right:-12.0px;">2011-03-06</span></div>
<div class="a sunk" style="left:698px;top:718px;width:197px;height:19px;"></div>
<div class="a sunk" style="left:898px;top:718px;width:126px;height:19px;"></div>
<div class="a " style="left:0px;top:739px;width:1024px;height:1px;background:#fff"></div>
<div class="a raised" style="left:2px;top:742px;width:47px;height:22px;"></div>
<svg class="a" style="left:5px;top:745px" width="16" height="16" viewBox="0 0 16 16"><path d="M1 3q3-2 6 0l-1 5q-3-2-6 0z" fill="#e85020"/><path d="M8 3q3 2 6 0l-1 5q-3 2-6 0z" fill="#40a840"/><path d="M0 9q3-2 6 0l-1 5q-3-2-6 0z" fill="#3868d8"/><path d="M7 9q3 2 6 0l-1 5q-3 2-6 0z" fill="#f0c020"/></svg>
<div class="t " style="left:22px;top:746px;"><span class="cn_">开始</span></div>
<svg class="a" style="left:58px;top:745px" width="16" height="16" viewBox="0 0 16 16"><path d="M14 1q-4 0-7 2-6 3-5 8 1 4 6 4 5 0 5-5 0-3-3-3l4-3z" fill="#d81818"/><path d="M13 2l-3 1" stroke="#901010"/><path d="M9 7q-4-1-4 3 1 3 4 2 2-1 1-3-2-1-2 1" fill="none" stroke="#fff" stroke-width="1.500"/></svg>
<svg class="a" style="left:80px;top:745px" width="16" height="16" viewBox="0 0 16 16"><rect x="1" y="2" width="13" height="13" rx="3" fill="#3890e0"/><path d="M4 5h7v7H4z" fill="#fff"/><path d="M6 10l6-7" stroke="#e06020" stroke-width="1.500"/><path d="M6 7h3M6 9h2" stroke="#3890e0"/></svg>
<svg class="a" style="left:103px;top:745px" width="16" height="16" viewBox="0 0 16 16"><rect x="0.500" y="0.500" width="15" height="15" rx="2" fill="#1860b8" stroke="#0c3c80"/><path d="M4 15q0-8 4-10 4 1 5 5" fill="#60b8f0"/><path d="M2 4q3-3 6 1" fill="none" stroke="#103050" stroke-width="2"/></svg>
<div class="a" style="left:127px;top:742px;width:100px;height:22px;background:#d4d0c8;border:1px solid;border-color:#fff #404040 #404040 #fff;box-shadow:inset -1px -1px 0 #808080"></div>
<svg class="a" style="left:131px;top:745px" width="16" height="16" viewBox="0 0 16 16"><path d="M1 4q0-1.500 1.500-1.500h3.500l1.500 1.500h6q1.500 0 1.500 1.500v6q0 1.500-1.500 1.500h-11q-1.500 0-1.500-1.500z" fill="#f4d868" stroke="#b89028"/><path d="M2 7h12" stroke="#fff0a0"/></svg>
<div class="t " style="left:151px;top:746px;color:#000"><span class="cn_">样品库存</span><span class="ln_" style="margin-right:-4.8px;">-...</span></div>
<div class="a" style="left:230px;top:742px;width:100px;height:22px;background:#d4d0c8;border:1px solid;border-color:#fff #404040 #404040 #fff;box-shadow:inset -1px -1px 0 #808080"></div>
<svg class="a" style="left:234px;top:745px" width="16" height="16" viewBox="0 0 16 16"><path d="M1 4q0-1.500 1.500-1.500h3.500l1.500 1.500h6q1.500 0 1.500 1.500v6q0 1.500-1.500 1.500h-11q-1.500 0-1.500-1.500z" fill="#f4d868" stroke="#b89028"/><path d="M2 7h12" stroke="#fff0a0"/></svg>
<div class="t " style="left:254px;top:746px;color:#000"><span class="ln_" style="margin-right:-2.4px;">db</span></div>
<div class="a" style="left:333px;top:742px;width:100px;height:22px;background:#d4d0c8;border:1px solid;border-color:#fff #404040 #404040 #fff;box-shadow:inset -1px -1px 0 #808080"></div>
<svg class="a" style="left:337px;top:745px" width="16" height="16" viewBox="0 0 16 16"><path d="M1 4q0-1.500 1.500-1.500h3.500l1.500 1.500h6q1.500 0 1.500 1.500v6q0 1.500-1.500 1.500h-11q-1.500 0-1.500-1.500z" fill="#f4d868" stroke="#b89028"/><path d="M2 7h12" stroke="#fff0a0"/></svg>
<div class="t " style="left:357px;top:746px;color:#000"><span class="cn_">专卖店</span></div>
<div class="a" style="left:436px;top:742px;width:100px;height:22px;background:#0a246a;color:#fff"></div>
<svg class="a" style="left:440px;top:745px" width="16" height="16" viewBox="0 0 16 16"><circle cx="5" cy="5" r="3" fill="#f0b070"/><circle cx="11" cy="5" r="3" fill="#f0b070"/><path d="M1 14q0-5 4-5t4 5zM7 14q0-5 4-5t4 5z" fill="#e08030"/></svg>
<div class="t " style="left:460px;top:746px;color:#fff;-webkit-text-stroke:0.5px #fff"><span class="ln_" style="margin-right:-14.4px;">Onlyit IN...</span></div>
<div class="a" style="left:539px;top:742px;width:100px;height:22px;background:repeating-conic-gradient(#fff 0 25%,#d4d0c8 0 50%) 0 0/2px 2px;border:1px solid;border-color:#404040 #fff #fff #404040;box-shadow:inset 1px 1px 0 #808080"></div>
<svg class="a" style="left:543px;top:745px" width="16" height="16" viewBox="0 0 16 16"><path d="M1.500 7.500L7 1.500h8l-5.500 6z" fill="#fff" stroke="#000"/><path d="M4 5.500h8M5.500 3.500h8" stroke="#000" stroke-width=".8"/><path d="M9.500 7.500L15 1.500v5l-5.500 7z" fill="#fff" stroke="#000"/><rect x="1.500" y="7.500" width="8" height="6" fill="#fff" stroke="#000"/><path d="M3 9.500h5M3 11.500h5" stroke="#000" stroke-width=".8"/></svg>
<div class="t " style="left:563px;top:746px;color:#000"><span class="cn_">库存管理</span><span class="ln_" style="margin-right:-4.8px;">-...</span></div>
<div class="a" style="left:643px;top:742px;width:101px;height:22px;background:#d4d0c8;border:1px solid;border-color:#fff #404040 #404040 #fff;box-shadow:inset -1px -1px 0 #808080"></div>
<svg class="a" style="left:647px;top:745px" width="16" height="16" viewBox="0 0 16 16"><path d="M3 3h10v8l-3 3H3z" fill="#f8c840" stroke="#c08820"/><path d="M10 14v-3h3" fill="#fce890" stroke="#c08820"/><circle cx="5" cy="3" r="2" fill="#e04020"/></svg>
<div class="t " style="left:667px;top:746px;color:#000"><span class="cn_">我很乖</span><span class="ln_" style="margin-right:-1.2px;">~</span></div>
<div class="a" style="left:747px;top:742px;width:101px;height:22px;background:#d4d0c8;border:1px solid;border-color:#fff #404040 #404040 #fff;box-shadow:inset -1px -1px 0 #808080"></div>
<svg class="a" style="left:751px;top:745px" width="16" height="16" viewBox="0 0 16 16"><circle cx="8" cy="8" r="6.500" fill="#30b030"/><path d="M4.500 8.500h7q0-4-3.500-4t-3.500 4q0 3.500 3.500 3.500 2.500 0 3.200-2" stroke="#fff" stroke-width="1.700" fill="none"/></svg>
<div class="t " style="left:771px;top:746px;color:#000"><span class="cn_">创建话题</span><span class="ln_" style="margin-right:-4.8px;"> ...</span></div>
<svg class="a" style="left:858px;top:747px" width="18" height="15" viewBox="0 0 18 15"><rect x="1.500" y="5.500" width="15" height="8" rx="1.500" fill="#fff" stroke="#000"/><path d="M3 8h12M3 10h12" stroke="#000" stroke-dasharray="1 1"/><path d="M5 12h8" stroke="#000"/><path d="M5 5q0-3 2-2t2 0 2 0 2 0" fill="none" stroke="#000"/></svg>
<div class="a " style="left:879px;top:743px;width:2px;height:22px;border-left:1px solid #808080;border-right:1px solid #fff"></div>
<div class="a sunk" style="left:886px;top:742px;width:136px;height:23px;"></div>
<svg class="a" style="left:889px;top:745px" width="16" height="16" viewBox="0 0 16 16"><rect x="1" y="3" width="8" height="7" fill="#203880"/><rect x="2" y="11" width="7" height="2" fill="#a0a8c0"/><path d="M11 2q2 3 0 6M13 1q3 4 0 8" stroke="#606060" fill="none"/><path d="M8 9l6 6M14 9l-6 6" stroke="#e02020" stroke-width="2"/></svg>
<svg class="a" style="left:907px;top:745px" width="16" height="16" viewBox="0 0 16 16"><rect x="6" y="1" width="8" height="7" rx="1" fill="#50a8f0"/><rect x="8" y="9" width="5" height="2" fill="#b0b8c8"/><rect x="1" y="5" width="8" height="7" rx="1" fill="#70c0f8"/><rect x="2" y="13" width="7" height="2" fill="#b0b8c8"/></svg>
<svg class="a" style="left:925px;top:745px" width="17" height="16" viewBox="0 0 17 16"><circle cx="11" cy="5" r="3.500" fill="#f0b888"/><path d="M6 15q0-6 5-6t5 6z" fill="#d84848"/><circle cx="6" cy="6" r="3.500" fill="#f8c8a0"/><path d="M0 15q0-6 6-6t6 6z" fill="#e86060"/><path d="M2.500 5q1-4 5-2 2 1 2 3" fill="none" stroke="#a05020" stroke-width="1.500"/></svg>
<svg class="a" style="left:943px;top:745px" width="16" height="16" viewBox="0 0 16 16"><circle cx="6" cy="6" r="5" fill="#707070"/><circle cx="5" cy="5" r="2" fill="#c0c0c0"/><circle cx="11" cy="11" r="4" fill="#e03030"/><path d="M8.500 11h5" stroke="#fff" stroke-width="1.800" transform="rotate(45 11 11)"/></svg>
<svg class="a" style="left:961px;top:745px" width="17" height="17" viewBox="0 0 17 17"><circle cx="8.500" cy="8.500" r="8" fill="#f0e820"/><path d="M2 12a8 8 0 0 0 13 0" fill="none" stroke="#30a030" stroke-width="2"/><path d="M8.500 4v8M4.500 8h8" stroke="#107010" stroke-width="2.200"/></svg>
<div class="t " style="left:984px;top:748px;"><span class="ln_" style="margin-right:-6.0px;">11:30</span></div>
<div class="a " style="left:870px;top:581px;width:153px;height:20px;border:1px solid #8fb8d0;border-radius:2px;background:linear-gradient(180deg,#f4fafd,#d8e8f2)"></div>
<svg class="a" style="left:876px;top:586px" width="10" height="10" viewBox="0 0 10 10"><path d="M5 1v7M1.500 5L5 8.500 8.500 5" fill="none" stroke="#20a820" stroke-width="2"/></svg>
<div class="t " style="left:900px;top:584px;font-size:11px;letter-spacing:-0.25px">0.7KB/S</div>
<div class="a " style="left:945px;top:585px;width:1px;height:12px;background:#b8d0e0"></div>
<svg class="a" style="left:950px;top:586px" width="10" height="10" viewBox="0 0 10 10"><path d="M5 9V2M1.500 5L5 1.500 8.500 5" fill="none" stroke="#f0a020" stroke-width="2"/></svg>
<div class="t " style="left:969px;top:584px;font-size:11px;letter-spacing:-0.3px">16.5KB/S</div>
</body></html>
